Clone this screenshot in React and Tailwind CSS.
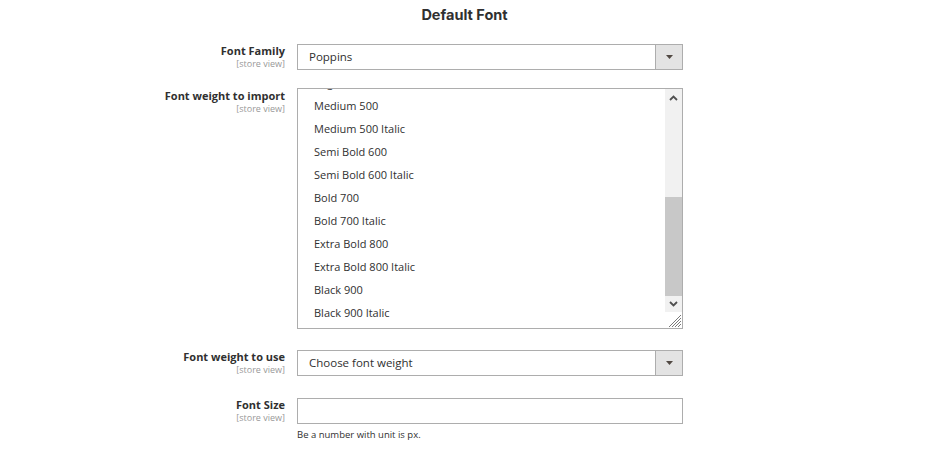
import React from "react";

const Label = ({ title }) => (
    <div className="w-[297px] shrink-0 text-right pr-3">
        <div className="text-[11px] leading-[14px] font-bold text-[#303030]">{title}</div>
        <div className="text-[9px] leading-[11px] text-[#999999]">[store view]</div>
    </div>
);

const SelectBox = ({ value }) => (
    <div className="flex w-[386px] h-[26px] border border-[#adadad] bg-white">
        <div className="flex-1 flex items-center pl-[11px] text-[11.5px] text-[#303030]">{value}</div>
        <div className="w-[27px] bg-[#e3e3e3] border-l border-[#adadad] flex items-center justify-center">
            <svg width="7" height="4" viewBox="0 0 7 4"><path d="M0 0h7L3.5 4z" fill="#514943" /></svg>
        </div>
    </div>
);

const weights = [
    "Regular 400 Italic",
    "Medium 500",
    "Medium 500 Italic",
    "Semi Bold 600",
    "Semi Bold 600 Italic",
    "Bold 700",
    "Bold 700 Italic",
    "Extra Bold 800",
    "Extra Bold 800 Italic",
    "Black 900",
    "Black 900 Italic",
];

const App = () => {
    return (
        <div className="w-[929px] h-[464px] bg-white font-['Open_Sans',sans-serif] text-[#303030]">
            <h2 className="text-center pt-[5px] text-[14.5px] leading-[20px] font-bold font-['Inter',sans-serif] text-[#303030]">Default Font</h2>

            <div className="flex items-start mt-[19px]">
                <Label title="Font Family" />
                <SelectBox value="Poppins" />
            </div>

            <div className="flex items-start mt-[18px]">
                <div className="pt-[1px]"><Label title="Font weight to import" /></div>
                <div className="w-[386px] h-[241px] border border-[#adadad] bg-white flex overflow-hidden">
                    <div className="flex-1 overflow-hidden">
                        <div className="-mt-[17px] pl-4">
                            {weights.map((w) => (
                                <div key={w} className="h-[23px] flex items-center text-[11px] text-[#303030]">{w}</div>
                            ))}
                        </div>
                    </div>
                    <div className="w-[17px] bg-[#f1f1f1] flex flex-col">
                        <div className="h-[17px] flex items-center justify-center">
                            <svg width="9" height="6" viewBox="0 0 9 6"><path d="M1 5l3.5-3.5L8 5" stroke="#505050" strokeWidth="1.8" fill="none" /></svg>
                        </div>
                        <div className="h-[91px]" />
                        <div className="h-[99px] bg-[#c8c8c8]" />
                        <div className="h-[16px] flex items-center justify-center">
                            <svg width="9" height="6" viewBox="0 0 9 6"><path d="M1 1l3.5 3.5L8 1" stroke="#505050" strokeWidth="1.8" fill="none" /></svg>
                        </div>
                        <div className="flex-1 bg-white flex items-end justify-end">
                            <svg width="13" height="13" viewBox="0 0 13 13">
                                <path d="M12 3L3 12M12 6L6 12M12 9L9 12M12 0L0 12" stroke="#7a7a7a" strokeWidth="1" />
                            </svg>
                        </div>
                    </div>
                </div>
            </div>

            <div className="flex items-start mt-[21px]">
                <Label title="Font weight to use" />
                <SelectBox value="Choose font weight" />
            </div>

            <div className="flex items-start mt-[22px]">
                <Label title="Font Size" />
                <div className="w-[386px]">
                    <div className="h-[26px] border border-[#adadad] bg-white" />
                    <div className="text-[9.5px] leading-[14px] mt-[4px] text-[#303030]">Be a number with unit is px.</div>
                </div>
            </div>
        </div>
    );
};

export default App;
